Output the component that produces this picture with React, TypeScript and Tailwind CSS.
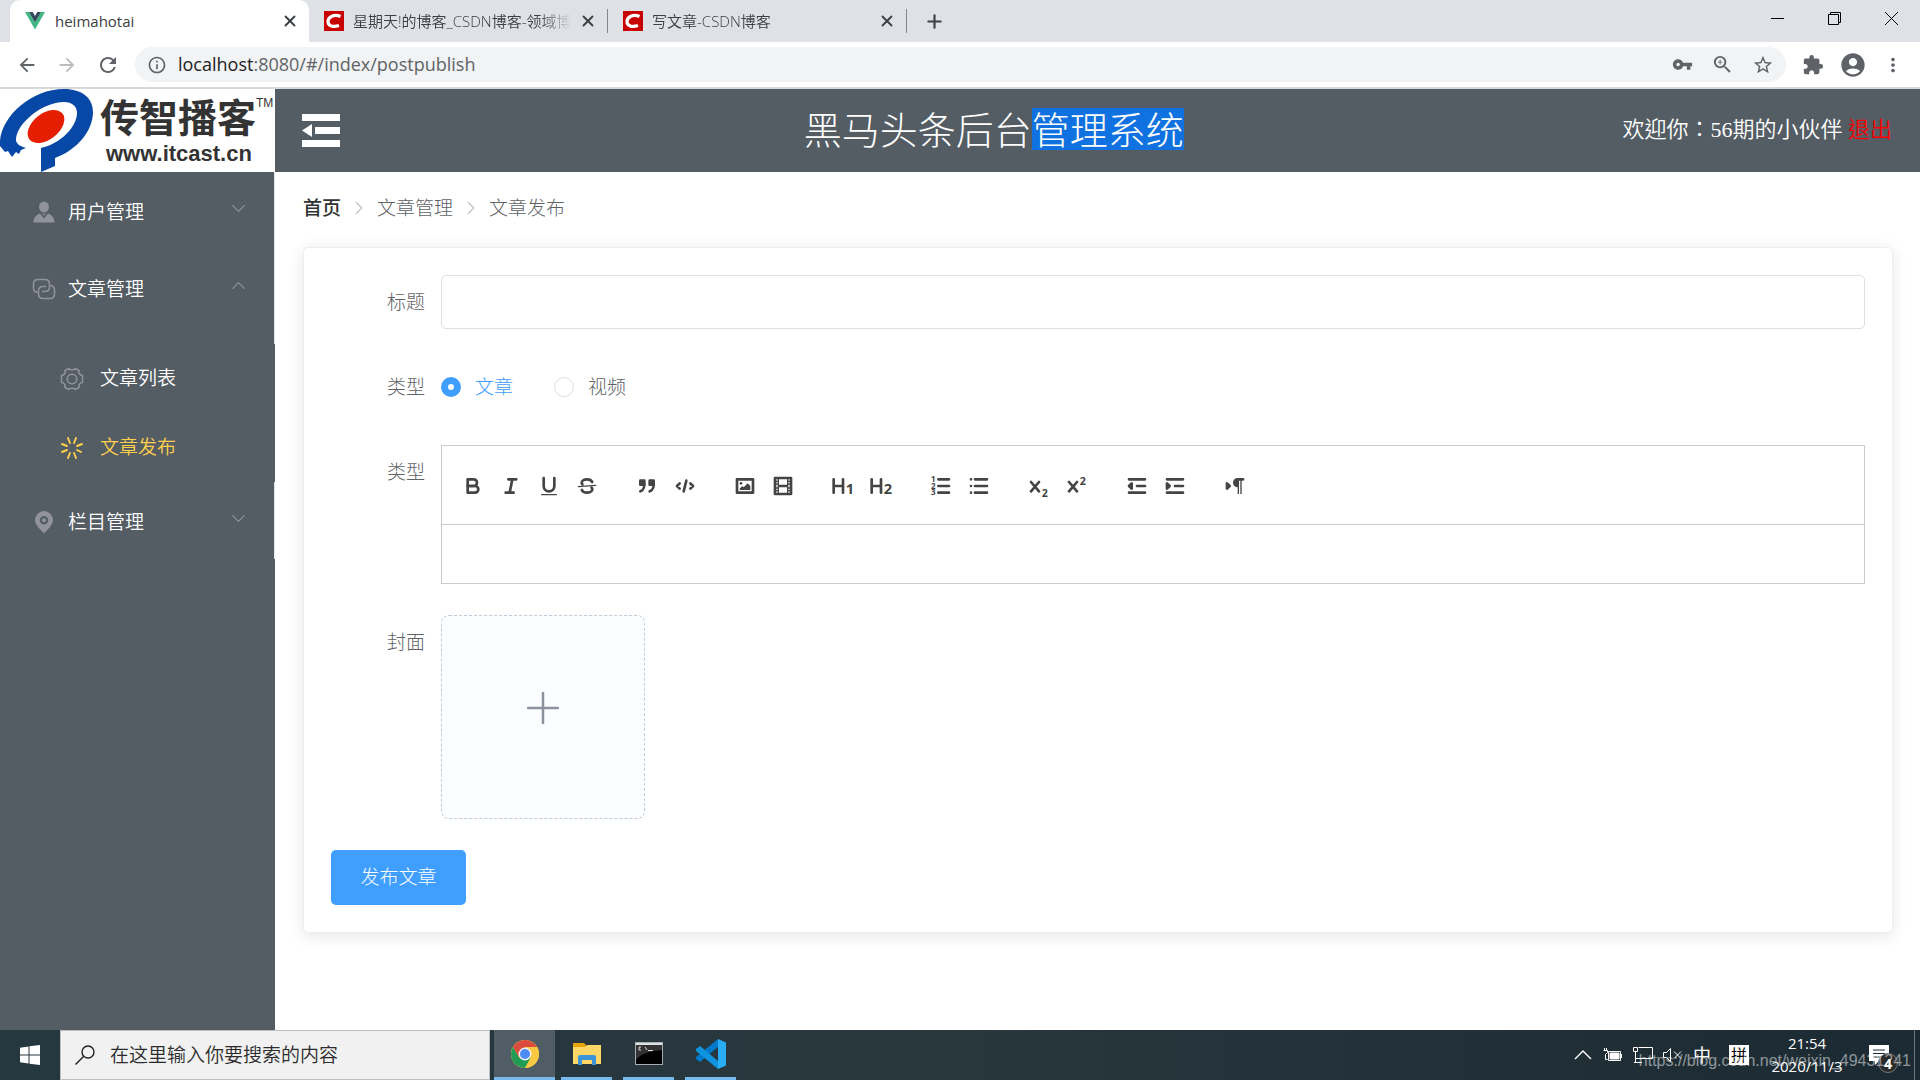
import React, { useState } from 'react';
import {
  MdAccountCircle,
  MdArrowBack,
  MdArrowForward,
  MdExtension,
  MdInfoOutline,
  MdMoreVert,
  MdRefresh,
  MdStarBorder,
  MdVpnKey,
  MdZoomIn
} from 'react-icons/md';
import { ChevronDown, ChevronRight, ChevronUp, Plus, X } from 'lucide-react';

interface BrowserTab {
  title: string;
  icon: 'vue' | 'csdn';
  active?: boolean;
}

const tabs: BrowserTab[] = [
  { title: 'heimahotai', icon: 'vue', active: true },
  { title: '星期天!的博客_CSDN博客-领域博主', icon: 'csdn' },
  { title: '写文章-CSDN博客', icon: 'csdn' }
];

function VueIcon() {
  return (
    <svg viewBox="0 0 20 18" className="w-5 h-[18px] shrink-0">
      <path d="M0 0h4l6 10.500L16 0h4L10 17.500z" fill="#41b883" />
      <path d="M4 0h3.700L10 4l2.300-4H16l-6 10.500z" fill="#35495e" />
    </svg>
  );
}

function CsdnIcon() {
  return (
    <svg viewBox="0 0 20 20" className="w-5 h-5 shrink-0">
      <rect width="20" height="20" fill="#c80000" />
      <path d="M16.500 5.500C10 2.500 4 6 4 10.500c0 4.500 5 6 11 4" fill="none" stroke="#fff" strokeWidth="3.200" />
    </svg>
  );
}

function TabStrip() {
  return (
    <div className="flex h-[42px] bg-[#dee1e6] pl-[10px] text-[15px] text-[#3c4043]">
      {tabs.map((tab) => (
        <div
          key={tab.title}
          className={
            tab.active
              ? 'flex w-[299px] items-center rounded-t-[10px] bg-white pl-[15px] pr-[10px]'
              : 'flex w-[299px] items-center pl-[15px]'
          }
        >
          {tab.icon === 'vue' ? <VueIcon /> : <CsdnIcon />}
          <span
            className={
              tab.active
                ? 'ml-[10px] flex-1 overflow-hidden whitespace-nowrap'
                : 'ml-[9px] flex-1 overflow-hidden whitespace-nowrap font-[350] [mask-image:linear-gradient(to_right,#000_85%,transparent)]'
            }
          >
            {tab.title}
          </span>
          <button type="button" aria-label="关闭标签" className="ml-2">
            <X size={18} strokeWidth={2.5} />
          </button>
          {!tab.active && <span className="ml-[10px] h-6 w-px bg-[#80868b]" />}
        </div>
      ))}
      <button type="button" aria-label="新标签" className="ml-[17px]">
        <Plus size={21} strokeWidth={2.5} />
      </button>
      <div className="ml-auto flex h-9 items-center gap-[42px] pr-[21px] text-black">
        <button type="button" aria-label="最小化">
          <svg viewBox="0 0 15 15" className="size-[15px]">
            <path d="M1 7.500h13" stroke="currentColor" />
          </svg>
        </button>
        <button type="button" aria-label="还原">
          <svg viewBox="0 0 15 15" className="size-[15px]" fill="none" stroke="currentColor">
            <path d="M1.500 3.500h10v10h-10zM3.500 3.500v-2h10v10h-2" />
          </svg>
        </button>
        <button type="button" aria-label="关闭">
          <svg viewBox="0 0 15 15" className="size-[15px]" fill="none" stroke="currentColor">
            <path d="M1 1l13 13M14 1L1 14" />
          </svg>
        </button>
      </div>
    </div>
  );
}

function AddressBar() {
  return (
    <div className="flex h-[47px] items-center border-b-2 border-[#d8d9dd] bg-white pl-4 pr-4 text-[#5f6368]">
      <div className="flex items-center gap-[18px]">
        <button type="button" aria-label="后退"><MdArrowBack size={22} /></button>
        <button type="button" aria-label="前进" className="text-[#babcbe]"><MdArrowForward size={22} /></button>
        <button type="button" aria-label="刷新"><MdRefresh size={24} /></button>
      </div>
      <div className="ml-[15px] flex h-[35px] flex-1 items-center rounded-full bg-[#f1f3f4] pl-3 pr-3">
        <MdInfoOutline size={20} />
        <div className="ml-[11px] flex-1 pb-px text-[18px] leading-6">
          <span className="text-[#202124]">localhost</span>:8080/#/index/postpublish
        </div>
        <div className="flex items-center gap-[18px]">
          <MdVpnKey size={21} />
          <MdZoomIn size={23} />
          <MdStarBorder size={22} />
        </div>
      </div>
      <div className="ml-4 flex items-center gap-[15px]">
        <MdExtension size={22} />
        <MdAccountCircle size={28} />
        <MdMoreVert size={22} />
      </div>
    </div>
  );
}

function Logo() {
  return (
    <div className="flex h-[83px] bg-white">
      <svg viewBox="0 0 96 83" className="w-24 shrink-0">
        <path
          d="M0 57C-2 30 30 0 64 0c18 0 29 9 29 23 0 19-16 38-38 46v8l-14 6V59c19-4 36-21 36-35 0-7-5-11-13-11-22 0-48 22-48 38 0 3 3 6 10 8l-5 2-2 4-3-2-4 5-4-6-3 1z"
          fill="#0747a6"
        />
        <ellipse cx="46" cy="37.500" rx="21" ry="13" transform="rotate(-38 46 37.500)" fill="#e61e00" />
      </svg>
      <div className="ml-1 flex flex-1 flex-col whitespace-nowrap text-[#333]">
        <div className="flex pt-1 leading-[47px]">
          <span className="text-[39px] font-bold">传智播客</span>
          <span className="font-[Liberation_Sans] text-[12px] leading-[20px]">TM</span>
        </div>
        <span className="ml-[6px] font-[Liberation_Sans] text-[22px] font-bold leading-7">www.itcast.cn</span>
      </div>
    </div>
  );
}

function UserIcon() {
  return (
    <svg viewBox="0 0 22 22" className="size-[22px]" fill="#909399">
      <ellipse cx="11" cy="6" rx="5" ry="5.500" />
      <path d="M.5 21.500c0-5 3-8 6.500-9l4 5 4-5c3.500 1 6.500 4 6.500 9zM9.500 12.500h3L11 15z" />
    </svg>
  );
}

function CopyLinkIcon() {
  return (
    <svg viewBox="0 0 24 24" className="size-6" fill="none" stroke="#909399" strokeWidth="1.600">
      <path d="M5.500 15.500C2.500 15 1.500 13.500 1.500 11V7c0-3 1.500-4.500 4.500-4.500h7c3 0 4.500 1.500 4.500 4.500v3c0 3-1.500 4.500-4.500 4.500H10" />
      <path d="M18.500 8.500c3 .5 4 2 4 4.500v4c0 3-1.500 4.500-4.500 4.500h-7c-3 0-4.500-1.500-4.500-4.500v-3c0-3 1.500-4.500 4.500-4.500H14" />
    </svg>
  );
}

function GearIcon() {
  return (
    <svg viewBox="0 0 24 24" className="size-6" fill="none" stroke="#909399" strokeWidth="1.600">
      <path d="M8.500 1.500c1 1.700 6 1.700 7 0l3.500 2c-1 2 1 5 3.500 5v7c-2.500 0-4.500 3-3.500 5l-3.500 2c-1-1.700-6-1.700-7 0l-3.500-2c1-2-1-5-3.500-5v-7c2.500 0 4.500-3 3.500-5z" />
      <circle cx="12" cy="12" r="4.800" />
    </svg>
  );
}

function LoadingIcon() {
  return (
    <svg viewBox="0 0 24 24" className="size-6" fill="none" stroke="#ffd04b" strokeWidth="1.900" strokeLinecap="round">
      <path d="M14 7l2-5M17 10l5-2M17 14l4 2M14 17l2 5M10 17l-2 5M7 14l-5 2M7 10L2 8M10 7L8 2" />
    </svg>
  );
}

function LocationIcon() {
  return (
    <svg viewBox="0 0 20 24" className="h-6 w-[22px]" fill="#909399">
      <path
        fillRule="evenodd"
        d="M10 1a9 9 0 0 1 9 9c0 5-5.500 9.500-9 13.500C6.500 19.500 1 15 1 10a9 9 0 0 1 9-9zm0 5a4.200 4.200 0 1 0 0 8.400A4.200 4.200 0 0 0 10 6z"
      />
      <circle cx="10" cy="10.200" r="2" />
    </svg>
  );
}

interface MenuRowProps {
  icon: React.ReactNode;
  title: string;
  open?: boolean;
  onClick?: () => void;
}

function MenuRow({ icon, title, open, onClick }: MenuRowProps) {
  return (
    <button
      type="button"
      onClick={onClick}
      className="flex h-[77px] w-full items-center border-r border-[#e6e6e6] pl-8 pr-6 pt-[3px] text-white"
    >
      <span className="flex w-6 justify-center">{icon}</span>
      <span className="ml-3 text-[19px]">{title}</span>
      <span className="mb-2 ml-auto text-[#909399]">
        {open ? <ChevronUp size={23} strokeWidth={1.25} /> : <ChevronDown size={23} strokeWidth={1.25} />}
      </span>
    </button>
  );
}

function Sidebar() {
  const [open, setOpen] = useState(true);

  return (
    <aside className="w-[275px] shrink-0 bg-[#545c64]">
      <Logo />
      <nav className="font-[350]">
        <MenuRow icon={<UserIcon />} title="用户管理" />
        <MenuRow icon={<CopyLinkIcon />} title="文章管理" open={open} onClick={() => setOpen(!open)} />
        {open && (
          <div>
            <div className="h-[18px] border-r border-[#e6e6e6]" />
            <a href="#/index/postlist" className="flex h-[69px] items-center pl-[60px] text-[19px] text-white">
              <GearIcon />
              <span className="ml-4">文章列表</span>
            </a>
            <a href="#/index/postpublish" className="flex h-[69px] items-center pl-[60px] text-[19px] text-[#ffd04b]">
              <LoadingIcon />
              <span className="ml-4">文章发布</span>
            </a>
          </div>
        )}
        <MenuRow icon={<LocationIcon />} title="栏目管理" />
      </nav>
    </aside>
  );
}

function Header() {
  return (
    <header className="flex h-[83px] items-center justify-between bg-[#545c64] pl-[26px] pr-7 text-white">
      <button type="button" aria-label="收起菜单" className="pr-6">
        <svg viewBox="0 0 40 33" className="h-[33px] w-10" fill="currentColor">
          <path d="M1 0h38v7H1zM14 13h25v7H14zM1 26h38v7H1zM1 16.500L11 10v13z" />
        </svg>
      </button>
      <h1 className="flex pb-1 text-[38px] font-light leading-[42px]">
        <span>黑马头条后台</span>
        <span className="bg-[#1072e0]">管理系统</span>
      </h1>
      <div className="pb-[2px] font-['Liberation_Serif','Noto_Sans_CJK_TC',sans-serif] text-[22px] font-[350]">
        欢迎你：56期的小伙伴{' '}
        <a href="#/login" className="text-[#ff0000]">退出</a>
      </div>
    </header>
  );
}

const digit = { fontFamily: 'Open Sans', fontWeight: 700, fill: '#444', stroke: 'none' };

const toolbar: { label: string; icon: React.ReactNode }[][] = [
  [
    {
      label: '加粗',
      icon: (
        <>
          <path d="M5 4h4.500a2.500 2.500 0 0 1 0 5H5z" />
          <path d="M5 9h5.500a2.500 2.500 0 0 1 0 5H5z" />
        </>
      )
    },
    { label: '斜体', icon: <path d="M7 4h6M5 14h6M8 14l2-10" /> },
    {
      label: '下划线',
      icon: (
        <>
          <path d="M5 3v6a4 4 0 0 0 8 0V3" />
          <rect x="3" y="15" width="12" height="1" rx=".5" fill="#444" stroke="none" />
        </>
      )
    },
    {
      label: '删除线',
      icon: (
        <>
          <path d="M15.500 8.500l-13 1" strokeWidth="1" />
          <path d="M12.900 6C12.400 4.800 10.900 4 9 4 6.800 4 5 5.100 5 6.500c0 .7.200 1 .6 1.300M5.100 12c.5 1.200 2 2 3.900 2 2.200 0 4-1.100 4-2.500 0-.7-.2-1-.6-1.300" />
        </>
      )
    }
  ],
  [
    {
      label: '引用',
      icon: (
        <g fill="#444">
          <path d="M4 5h3v3H4zM11 5h3v3h-3z" />
          <path d="M7 8c0 4-3 5-3 5M14 8c0 4-3 5-3 5" fill="none" />
        </g>
      )
    },
    { label: '代码', icon: <path d="M5 7L3 9l2 2M13 7l2 2-2 2M10 5L8 13" /> }
  ],
  [
    {
      label: '图片',
      icon: (
        <>
          <rect x="3" y="4" width="12" height="10" />
          <circle cx="6" cy="7" r="1" fill="#444" stroke="none" />
          <path d="M5 12v-1l2-2 1 1 3-3 2 2v3z" fill="#444" stroke="none" />
        </>
      )
    },
    {
      label: '视频',
      icon: (
        <>
          <rect x="3" y="3" width="12" height="12" />
          <path
            d="M5 3h1v12H5zM12 3h1v12h-1zM5 8h8v2H5zM3 5h3v1H3zM3 7h3v1H3zM3 10h3v1H3zM3 12h3v1H3zM12 5h3v1h-3zM12 7h3v1h-3zM12 10h3v1h-3zM12 12h3v1h-3z"
            fill="#444"
            stroke="none"
          />
        </>
      )
    }
  ],
  [
    {
      label: '一级标题',
      icon: (
        <>
          <path d="M2 4v10M9 4v10M2 9h7" />
          <text x="11" y="15" fontSize="11" {...digit}>1</text>
        </>
      )
    },
    {
      label: '二级标题',
      icon: (
        <>
          <path d="M2 4v10M9 4v10M2 9h7" />
          <text x="11" y="15" fontSize="11" {...digit}>2</text>
        </>
      )
    }
  ],
  [
    {
      label: '有序列表',
      icon: (
        <>
          <path d="M7 4h8M7 9h8M7 14h8" />
          <text x="1.500" y="6" fontSize="6" {...digit}>1</text>
          <text x="1.500" y="11" fontSize="6" {...digit}>2</text>
          <text x="1.500" y="16" fontSize="6" {...digit}>3</text>
        </>
      )
    },
    { label: '无序列表', icon: <path d="M6 4h9M6 9h9M6 14h9M3 4h0M3 9h0M3 14h0" /> }
  ],
  [
    {
      label: '下标',
      icon: (
        <>
          <path d="M3 6l6 7M9 6l-6 7" />
          <text x="11" y="17" fontSize="8" {...digit}>2</text>
        </>
      )
    },
    {
      label: '上标',
      icon: (
        <>
          <path d="M3 6l6 7M9 6l-6 7" />
          <text x="11" y="8" fontSize="8" {...digit}>2</text>
        </>
      )
    }
  ],
  [
    { label: '减少缩进', icon: <path d="M3 14h12M3 4h12M9 9h6M5 7v4L3 9z" fill="#444" /> },
    { label: '增加缩进', icon: <path d="M3 14h12M3 4h12M9 9h6M3 7v4l2-2z" fill="#444" /> }
  ],
  [
    {
      label: '文字方向',
      icon: (
        <>
          <path d="M3 11V7l2 2z" fill="#444" />
          <path d="M11.500 4h3.500" />
          <path d="M11 3a3.500 3.500 0 0 0 0 7zM11 3h1v12h-1zM13 3h1v12h-1z" fill="#444" stroke="none" />
        </>
      )
    }
  ]
];

function Editor() {
  return (
    <div className="flex-1 border border-[#ccc]">
      <div className="flex h-[79px] items-center gap-[22px] border-b border-[#ccc] pl-3 pt-[2px]">
        {toolbar.map((group, i) => (
          <div key={i} className="flex">
            {group.map((item) => (
              <button key={item.label} type="button" aria-label={item.label} className="flex h-8 w-[38px] items-center justify-center">
                <svg
                  viewBox="0 0 18 18"
                  className="size-6"
                  fill="none"
                  stroke="#444"
                  strokeWidth="2"
                  strokeLinecap="round"
                  strokeLinejoin="round"
                >
                  {item.icon}
                </svg>
              </button>
            ))}
          </div>
        ))}
      </div>
      <textarea id="content" className="block h-[58px] w-full resize-none px-5 py-4 text-[17px] outline-none" />
    </div>
  );
}

const radios = [
  { value: 'article', label: '文章' },
  { value: 'video', label: '视频' }
];

function PublishForm() {
  const [type, setType] = useState('article');

  return (
    <form
      onSubmit={(e) => e.preventDefault()}
      className="flex flex-col gap-[31px] rounded-[5px] border border-[#ebeef5] bg-white px-[27px] pb-[27px] pt-[27px] text-[19px] text-[#606266] shadow-[0_3px_16px_rgba(0,0,0,0.1)]"
    >
      <div className="flex">
        <label htmlFor="title" className="w-[110px] pr-4 text-right leading-[54px]">标题</label>
        <input id="title" type="text" className="h-[54px] flex-1 rounded-[5px] border border-[#dcdfe6] px-5 outline-none" />
      </div>

      <div className="flex" role="radiogroup" aria-labelledby="type-label">
        <span id="type-label" className="w-[110px] pr-4 text-right leading-[54px]">类型</span>
        <div className="flex items-center gap-[41px]">
          {radios.map((radio) => (
            <label key={radio.value} className="flex items-center gap-[14px]">
              <input
                type="radio"
                name="type"
                value={radio.value}
                checked={type === radio.value}
                onChange={() => setType(radio.value)}
                className="peer size-5 appearance-none rounded-full border border-[#dcdfe6] bg-white checked:border-[7px] checked:border-[#409eff]"
              />
              <span className="peer-checked:text-[#409eff]">{radio.label}</span>
            </label>
          ))}
        </div>
      </div>

      <div className="flex">
        <label htmlFor="content" className="w-[110px] pr-4 text-right leading-[54px]">类型</label>
        <Editor />
      </div>

      <div className="flex">
        <span className="w-[110px] pr-4 text-right leading-[54px]">封面</span>
        <button
          type="button"
          aria-label="上传封面"
          className="flex size-[204px] items-center justify-center rounded-lg border border-dashed border-[#c0ccda] bg-[#fbfdff] pb-[18px]"
        >
          <svg viewBox="0 0 32 32" className="size-8" stroke="#8c939d" strokeWidth="2.500" strokeLinecap="round">
            <path d="M16 1v30M1 16h30" />
          </svg>
        </button>
      </div>

      <button type="submit" className="h-[55px] w-[135px] rounded-[5px] bg-[#409eff] text-[19px] text-white">
        发布文章
      </button>
    </form>
  );
}

function Taskbar() {
  return (
    <footer className="relative flex h-[50px] items-stretch bg-linear-to-r from-[#25373f] via-[#28373c] to-[#1c2b33] text-white">
      <button type="button" aria-label="开始" className="flex w-[60px] items-center justify-center">
        <svg viewBox="0 0 20 20" className="size-5" fill="#fff">
          <path d="M0 2.700L8.500 1.500v8H0zM9.500 1.300L20 0v9.500H9.500zM0 10.500h8.500v8L0 17.300zM9.500 10.500H20V20L9.500 18.700z" />
        </svg>
      </button>
      <label className="flex w-[430px] items-center border border-[#bfbfbf] bg-[#f1f1f1] pl-[14px]">
        <svg viewBox="0 0 20 20" className="size-5" fill="none" stroke="#222" strokeWidth="1.400">
          <circle cx="13" cy="7" r="6" />
          <path d="M8.500 11.500L.5 19.500" />
        </svg>
        <input
          type="text"
          aria-label="搜索"
          placeholder="在这里输入你要搜索的内容"
          className="ml-[15px] flex-1 text-[19px] font-[350] outline-none placeholder:text-[#2b2b2b]"
        />
      </label>

      <div className="ml-1 flex gap-[6px]">
        <button type="button" aria-label="Chrome" className="flex w-[61px] items-center justify-center border-b-3 border-[#76b9ed] bg-[#505d65]">
          <svg viewBox="0 0 28 28" className="size-7">
            <circle cx="14" cy="14" r="14" fill="#fbc941" />
            <path d="M1.900 7A14 14 0 0 1 26.100 7H14L8 17.500z" fill="#db4a3e" />
            <path d="M1.900 7A14 14 0 0 0 14 28L20 17.500 8 17.500z" fill="#1f9d57" />
            <path d="M14 7h12.100A14 14 0 0 1 14 28l6-10.500z" fill="#fbc941" />
            <circle cx="14" cy="14" r="6.500" fill="#f1f1f1" />
            <circle cx="14" cy="14" r="5" fill="#4c8bf5" />
          </svg>
        </button>
        <button type="button" aria-label="文件资源管理器" className="flex w-[51px] items-center justify-center border-b-3 border-[#76b9ed]">
          <svg viewBox="0 0 28 24" className="h-6 w-7">
            <path d="M0 1h11l2 2v5H0z" fill="#e5a50a" />
            <path d="M0 5h12l2-2h14v19H0z" fill="#ffd766" />
            <path d="M5 23V15q0-2 2-2h14q2 0 2 2v8h-4v-5H9v5z" fill="#3c94d9" />
          </svg>
        </button>
        <button type="button" aria-label="命令提示符" className="ml-[5px] flex w-[51px] items-center justify-center border-b-3 border-[#76b9ed]">
          <svg viewBox="0 0 28 24" className="h-6 w-7">
            <rect x=".5" y=".5" width="27" height="22" fill="#000" stroke="#a8acae" />
            <rect x="1" y="1" width="26" height="2" fill="#dfe3e6" />
            <path d="M1 3h26v5C16 9 6 11 1 18z" fill="#333" />
            <path d="M6 5H4v3h2M8 5v0M8 8v0M10 5l2 3M13 8.500h5" fill="none" stroke="#ddd" />
          </svg>
        </button>
        <button type="button" aria-label="VS Code" className="ml-[5px] flex w-[51px] items-center justify-center border-b-3 border-[#76b9ed]">
          <svg viewBox="0 0 30 30" className="size-[30px]">
            <path d="M22 8L4 23 0 20v-2L22 0z" fill="#0179cb" />
            <path d="M22 22L4 7 0 10v2l22 18z" fill="#0e93dd" />
            <path d="M22 0l8 3.500v23L22 30z" fill="#29adf5" />
          </svg>
        </button>
      </div>

      <div className="ml-auto flex items-center pr-[5px]">
        <svg viewBox="0 0 18 10" className="h-[10px] w-[18px]" fill="none" stroke="#fff" strokeWidth="1.400">
          <path d="M1 9l8-8 8 8" />
        </svg>
        <svg viewBox="0 0 20 14" className="ml-[11px] h-[14px] w-5" fill="none" stroke="#fff">
          <path d="M5.500 3.500h12v9h-12zM18.500 6v4M1.500 0v2M3.500 0v2M.5 2.500h4v2l-2 2v5h2" />
          <path d="M7 5h9v6H7z" fill="#fff" />
        </svg>
        <svg viewBox="0 0 20 18" className="ml-[10px] h-[18px] w-5" fill="none" stroke="#fff">
          <path d="M5.500 1.500h14v11H2.500M.5 1.500h4v4h-4zM2.500 5.500v11M1 16.500h8" />
        </svg>
        <svg viewBox="0 0 20 16" className="ml-[10px] h-4 w-5" fill="none" stroke="#fff">
          <path d="M.5 5.500h3l4-4v13l-4-4h-3zM11 4.500l7 7M18 4.500l-7 7" />
        </svg>
        <span className="ml-[10px] text-[18px]">中</span>
        <span className="ml-[18px] flex size-5 items-center justify-center bg-white text-[16px] text-black">拼</span>
        <div className="ml-[19px] w-[78px] text-center text-[15px] leading-[23px]">
          <div>21:54</div>
          <div>2020/11/3</div>
        </div>
        <button type="button" aria-label="通知" className="relative ml-[23px] w-[34px]">
          <svg viewBox="0 0 20 20" className="size-5" fill="#fff">
            <path d="M0 0h20v16H10l-4 4v-4H0z" />
            <path d="M4 5h12M4 8.500h12M4 12h8" stroke="#1c2b33" />
          </svg>
          <span className="absolute left-[9px] top-2 flex size-5 items-center justify-center rounded-full border border-[#777] bg-[#2a2a2a] text-[14px] font-bold">
            4
          </span>
        </button>
        <span className="ml-[11px] h-[50px] w-px bg-[#6b757b]" />
      </div>
      <span className="absolute right-[9px] top-[21px] font-[Liberation_Sans] text-[16px] leading-5 text-white/50">
        https://blog.csdn.net/weixin_49431241
      </span>
    </footer>
  );
}

export default function App() {
  return (
    <div className="flex min-h-screen flex-col bg-white font-['Open_Sans','Noto_Sans_CJK_SC',sans-serif]">
      <TabStrip />
      <AddressBar />
      <div className="flex flex-1">
        <Sidebar />
        <div className="flex-1">
          <Header />
          <main className="pb-10 pl-7 pr-[27px] pt-[22px] font-light">
            <nav className="mb-[25px] flex h-7 items-center gap-[7px] text-[19px] text-[#606266]">
              <a href="#/index" className="font-medium text-[#303133]">首页</a>
              <ChevronRight size={22} strokeWidth={1.5} className="text-[#c0c4cc]" />
              <span>文章管理</span>
              <ChevronRight size={22} strokeWidth={1.5} className="text-[#c0c4cc]" />
              <span>文章发布</span>
            </nav>
            <PublishForm />
          </main>
        </div>
      </div>
      <Taskbar />
    </div>
  );
}
